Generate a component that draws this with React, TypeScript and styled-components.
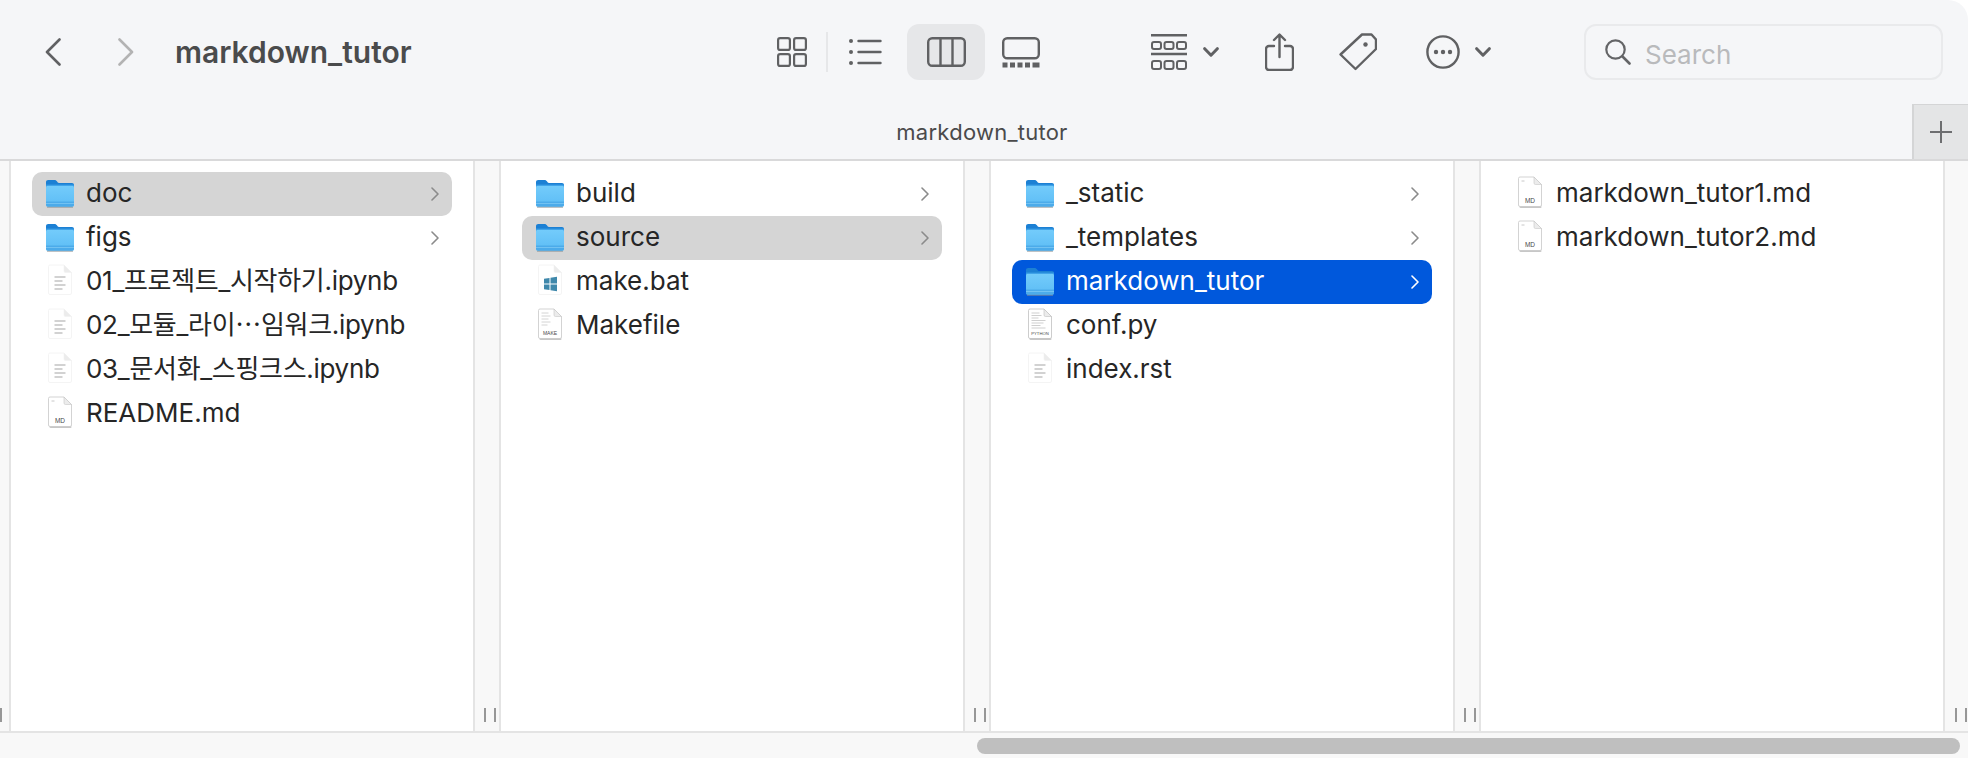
import React from "react";
import styled, { createGlobalStyle } from "styled-components";

const GlobalStyle = createGlobalStyle`
  html, body {
    margin: 0;
    padding: 0;
    background: #ffffff;
  }
  * {
    box-sizing: border-box;
  }
`;

const FONT = `Inter, "Noto Sans CJK KR", sans-serif`;

const Window = styled.div`
  width: 1968px;
  height: 758px;
  overflow: hidden;
  display: flex;
  flex-direction: column;
  font-family: ${FONT};
  color: #262626;
`;

const Header = styled.header`
  height: 161px;
  flex: none;
  background: #f5f6f8;
  border-bottom: 2px solid #d9d9da;
  border-top-right-radius: 20px;
  display: flex;
  flex-direction: column;
`;

const Toolbar = styled.div`
  height: 104px;
  flex: none;
  display: flex;
  align-items: center;
  padding-left: 45px;
`;

const Tool = styled.div<{ $gap?: number; $w: number; $dim?: boolean }>`
  flex: none;
  display: flex;
  justify-content: center;
  align-items: center;
  width: ${(p) => p.$w}px;
  margin-left: ${(p) => p.$gap ?? 0}px;
  color: ${(p) => (p.$dim ? "#b3b3b3" : "#606163")};
`;

const Title = styled.div`
  flex: none;
  width: 602px;
  margin-left: 41px;
  font-size: 30px;
  font-weight: 600;
  color: #4a4b4c;
  line-height: 32px;
`;

const Separator = styled.div`
  flex: none;
  width: 2px;
  height: 40px;
  margin-left: 19px;
  background: #e6e7e9;
`;

const ActiveTool = styled(Tool)`
  height: 56px;
  border-radius: 12px;
  background: #e6e7e9;
`;

const SearchBox = styled.div`
  flex: none;
  width: 359px;
  height: 56px;
  margin-left: 93px;
  border: 2px solid #e9eaec;
  border-radius: 12px;
  display: flex;
  align-items: center;
  gap: 14px;
  padding-left: 19px;
  color: #646567;
`;

const SearchText = styled.span`
  font-size: 26px;
  color: #b9babc;
  padding-top: 5px;
`;

const TabBar = styled.div`
  flex: 1;
  display: flex;
`;

const TabLabel = styled.div`
  flex: 1;
  display: flex;
  justify-content: center;
  align-items: center;
  padding-left: 52px;
  font-size: 22px;
  letter-spacing: 0.25px;
  color: #4a4a4b;
`;

const AddTab = styled.div`
  flex: none;
  width: 56px;
  display: flex;
  justify-content: center;
  align-items: center;
  background: #e4e5e6;
  border-left: 2px solid #d4d5d6;
  border-top: 1px solid #d4d5d6;
  color: #6d6e70;
`;

const Columns = styled.div`
  flex: none;
  height: 570px;
  display: flex;
`;

const Gutter = styled.div<{ $w: number; $pad: number; $edge?: boolean }>`
  flex: none;
  width: ${(p) => p.$w}px;
  padding-left: ${(p) => p.$pad}px;
  padding-bottom: 9px;
  display: flex;
  align-items: flex-end;
  gap: 8px;
  background: #f8f8f8;
  border-right: ${(p) => (p.$edge ? "none" : "2px solid #e4e4e4")};
  border-left: ${(p) => (p.$pad > 0 ? "2px solid #e4e4e4" : "none")};
`;

const GripBar = styled.span`
  width: 2px;
  height: 14px;
  background: #979797;
`;

const Column = styled.div`
  flex: none;
  width: 462px;
  background: #ffffff;
  padding: 11px 21px 0;
  display: flex;
  flex-direction: column;
`;

const Row = styled.div<{ $state?: "active" | "dim" }>`
  height: 44px;
  flex: none;
  display: flex;
  align-items: center;
  gap: 13px;
  padding: 0 13px 0 14px;
  border-radius: 10px;
  font-size: 26px;
  background: ${(p) =>
    p.$state === "active" ? "#0058dc" : p.$state === "dim" ? "#d5d5d5" : "transparent"};
  color: ${(p) => (p.$state === "active" ? "#ffffff" : "#262626")};
`;

const RowIcon = styled.span<{ $file?: boolean }>`
  flex: none;
  width: 28px;
  height: 34px;
  padding-bottom: ${(p) => (p.$file ? "4px" : "0")};
  display: flex;
  justify-content: center;
  align-items: center;
`;

const RowName = styled.span<{ $tight?: boolean }>`
  flex: 1;
  white-space: nowrap;
  line-height: 32px;
  margin-left: -1px;
  margin-top: -2px;
  letter-spacing: ${(p) => (p.$tight ? "-0.3px" : "0")};
`;

const RowChevron = styled.span<{ $active?: boolean }>`
  flex: none;
  display: flex;
  color: ${(p) => (p.$active ? "#ffffff" : "#8b8b8b")};
`;

const ScrollTrack = styled.div`
  flex: 1;
  background: #f8f8f8;
  border-top: 2px solid #e4e4e4;
  padding: 5px 0 0 977px;
`;

const ScrollThumb = styled.div`
  width: 983px;
  height: 16px;
  border-radius: 8px;
  background: #bfbfbf;
`;

const Chevron = ({ dir, w = 16, h = 28 }: { dir: "left" | "right"; w?: number; h?: number }) => (
  <svg width={w} height={h} viewBox="0 0 16 28" fill="none" stroke="currentColor" strokeWidth="2.6" strokeLinecap="round" strokeLinejoin="round">
    <path d={dir === "left" ? "M14.5 1.5 2 14l12.5 12.5" : "M1.5 1.5 14 14 1.5 26.5"} />
  </svg>
);

const Caret = () => (
  <svg width="16" height="10" viewBox="0 0 16 10" fill="none" stroke="currentColor" strokeWidth="3" strokeLinecap="round" strokeLinejoin="round">
    <path d="M1.7 1.7 8 8.2l6.3-6.5" />
  </svg>
);

const GridIcon = () => (
  <svg width="30" height="30" viewBox="0 0 30 30" fill="none" stroke="currentColor" strokeWidth="2.2">
    <rect x="1.1" y="1.1" width="11.8" height="11.8" rx="2" />
    <rect x="17.1" y="1.1" width="11.8" height="11.8" rx="2" />
    <rect x="1.1" y="17.1" width="11.8" height="11.8" rx="2" />
    <rect x="17.1" y="17.1" width="11.8" height="11.8" rx="2" />
  </svg>
);

const ListIcon = () => (
  <svg width="33" height="26" viewBox="0 0 33 26" fill="none" stroke="currentColor" strokeWidth="2.4" strokeLinecap="round">
    <path d="M9.5 2h22M9.5 13h22M9.5 24h22" />
    <circle cx="2" cy="2" r="2" fill="currentColor" stroke="none" />
    <circle cx="2" cy="13" r="2" fill="currentColor" stroke="none" />
    <circle cx="2" cy="24" r="2" fill="currentColor" stroke="none" />
  </svg>
);

const ColumnsIcon = () => (
  <svg width="39" height="30" viewBox="0 0 39 30" fill="none" stroke="currentColor" strokeWidth="2.4">
    <rect x="1.2" y="1.2" width="36.6" height="27.6" rx="4" />
    <path d="M13.5 1.2v27.6M25.5 1.2v27.6" />
  </svg>
);

const GalleryIcon = () => (
  <svg width="38" height="31" viewBox="0 0 38 31" fill="none" stroke="currentColor" strokeWidth="2.4">
    <rect x="1.2" y="1.2" width="35.6" height="20" rx="4" />
    <path d="M0.5 28h5M8 28h5M15.5 28h5M23 28h5M30.5 28h7" strokeWidth="5" />
  </svg>
);

const GroupIcon = () => (
  <svg width="36" height="36" viewBox="0 0 36 36" fill="none" stroke="currentColor" strokeWidth="2">
    <path d="M0 1.2h36M0 20h36" strokeWidth="2.4" />
    <rect x="1" y="8" width="9" height="7" rx="2" />
    <rect x="13.5" y="8" width="9" height="7" rx="2" />
    <rect x="26" y="8" width="9" height="7" rx="2" />
    <rect x="1" y="27" width="9" height="8" rx="2" />
    <rect x="13.5" y="27" width="9" height="8" rx="2" />
    <rect x="26" y="27" width="9" height="8" rx="2" />
  </svg>
);

const ShareIcon = () => (
  <svg width="29" height="38" viewBox="0 0 29 38" fill="none" stroke="currentColor" strokeWidth="2.4" strokeLinecap="round" strokeLinejoin="round">
    <path d="M9 13H4a3 3 0 0 0-3 3v18a3 3 0 0 0 3 3h21a3 3 0 0 0 3-3V16a3 3 0 0 0-3-3h-5" />
    <path d="M14.5 24V2M9 7l5.5-5.5L20 7" />
  </svg>
);

const TagIcon = () => (
  <svg width="38" height="38" viewBox="0 0 38 38" fill="none" stroke="currentColor" strokeWidth="2.4" strokeLinejoin="round">
    <path d="M23 1.5h9.5l4.5 5v9.5L16.5 36 1.5 21.5z" />
    <circle cx="26.5" cy="11.5" r="2.2" fill="currentColor" stroke="none" />
  </svg>
);

const MoreIcon = () => (
  <svg width="34" height="34" viewBox="0 0 34 34" fill="none" stroke="currentColor" strokeWidth="2.4">
    <circle cx="17" cy="17" r="15.6" />
    <circle cx="10" cy="17" r="2.2" fill="currentColor" stroke="none" />
    <circle cx="17" cy="17" r="2.2" fill="currentColor" stroke="none" />
    <circle cx="24" cy="17" r="2.2" fill="currentColor" stroke="none" />
  </svg>
);

const SearchIcon = () => (
  <svg width="26" height="26" viewBox="0 0 26 26" fill="none" stroke="currentColor" strokeWidth="2.2" strokeLinecap="round">
    <circle cx="10.5" cy="10.5" r="9.2" />
    <path d="m17.5 17.5 7 7" strokeWidth="2.6" />
  </svg>
);

const PlusIcon = () => (
  <svg width="22" height="22" viewBox="0 0 22 22" fill="none" stroke="currentColor" strokeWidth="2">
    <path d="M11 0v22M0 11h22" />
  </svg>
);

const RowCaret = () => (
  <svg width="8" height="14" viewBox="0 0 8 14" fill="none" stroke="currentColor" strokeWidth="1.6" strokeLinecap="round" strokeLinejoin="round">
    <path d="M1 1l6 6-6 6" />
  </svg>
);

const FolderIcon = () => (
  <svg width="28" height="28" viewBox="0 0 28 28">
    <defs>
      <linearGradient id="folderBody" x1="0" y1="0" x2="0" y2="1">
        <stop offset="0" stopColor="#74ccfb" />
        <stop offset="1" stopColor="#5cbcf5" />
      </linearGradient>
    </defs>
    <path d="M0 2.2C0 .9.9 0 2.2 0h6.3c1 0 1.6.4 2.2 1.1l1.1 1.4c.3.3.6.5 1.1.5H26c1.2 0 2 .8 2 2v4H0z" fill="#1c80d4" />
    <rect x="0" y="5.2" width="28" height="21.5" rx="2" fill="url(#folderBody)" />
    <rect x="0" y="4.6" width="28" height="1.2" fill="#3a9fe6" />
    <path d="M0 21.5h28v3.2a2 2 0 0 1-2 2H2a2 2 0 0 1-2-2z" fill="#4cabea" />
    <rect x="0" y="23" width="28" height="0.8" fill="#7cc8f4" />
    <rect x="1" y="26.7" width="26" height="1.3" fill="#8a8f94" opacity="0.55" />
  </svg>
);

const PageShape = ({ stroke, shade }: { stroke: string; shade?: boolean }) => (
  <>
    {shade && <rect x="1" y="30" width="22" height="2" rx="1" fill="#000" opacity="0.22" />}
    <path d="M1.5 1h14L23 8.5V29a1.5 1.5 0 0 1-1.5 1.5h-20A1.5 1.5 0 0 1 0 29V2.5A1.5 1.5 0 0 1 1.5 1z" fill="#fff" stroke={stroke} strokeWidth="0.8" />
    <path d="M15.5 1v6a1.5 1.5 0 0 0 1.5 1.5h6z" fill="#ececec" stroke={stroke} strokeWidth="0.6" />
  </>
);

const DocIcon = () => (
  <svg width="24" height="32" viewBox="-0.5 0 24 32">
    <PageShape stroke="#f1f1f1" />
    <path d="M6 13h11M6 17h8M6 21h11M6 25h8" stroke="#c4c4c4" strokeWidth="1.4" />
  </svg>
);

const MdIcon = () => (
  <svg width="24" height="32" viewBox="-0.5 0 24 32">
    <PageShape stroke="#c8c8c8" shade />
    <path d="M3 5h3" stroke="#c8c8c8" strokeWidth="1" />
    <text x="11.5" y="26.5" textAnchor="middle" fontSize="6.5" fontFamily="Liberation Sans, sans-serif" fill="#4a4a4a">MD</text>
  </svg>
);

const MakeIcon = () => (
  <svg width="24" height="32" viewBox="-0.5 0 24 32">
    <PageShape stroke="#c8c8c8" shade />
    <path d="M3 5h7M3 8h9M3 11h7M3 14h9M3 17h6" stroke="#d4d4d4" strokeWidth="1" />
    <text x="11.5" y="26.5" textAnchor="middle" fontSize="5" fontFamily="Liberation Sans, sans-serif" fill="#4a4a4a">MAKE</text>
  </svg>
);

const PythonIcon = () => (
  <svg width="24" height="32" viewBox="-0.5 0 24 32">
    <PageShape stroke="#c0c0c0" shade />
    <path d="M3 5h8M3 7.5h10M3 10h7M3 12.5h14M3 15h12M3 17.5h9M3 20h14" stroke="#cfcfcf" strokeWidth="1.2" />
    <text x="11.5" y="26.5" textAnchor="middle" fontSize="4.2" fontFamily="Liberation Sans, sans-serif" fill="#4a4a4a">PYTHON</text>
  </svg>
);

const BatIcon = () => (
  <svg width="24" height="32" viewBox="-0.5 0 24 32">
    <PageShape stroke="#f1f1f1" />
    <path d="M5.5 14.8 11 14v5.5H5.5zM12 13.8l6.5-1v6.7H12zM5.5 20.5H11V26l-5.5-.8zM12 20.5h6.5v6.7l-6.5-1z" fill="#3f88ab" />
  </svg>
);

type Entry = {
  name: string;
  icon: React.ReactNode;
  folder?: boolean;
  tight?: boolean;
  state?: "active" | "dim";
};

const columns: Entry[][] = [
  [
    { name: "doc", icon: <FolderIcon />, folder: true, state: "dim" },
    { name: "figs", icon: <FolderIcon />, folder: true },
    { name: "01_프로젝트_시작하기.ipynb", icon: <DocIcon />, tight: true },
    { name: "02_모듈_라이⋯임워크.ipynb", icon: <DocIcon />, tight: true },
    { name: "03_문서화_스핑크스.ipynb", icon: <DocIcon />, tight: true },
    { name: "README.md", icon: <MdIcon /> },
  ],
  [
    { name: "build", icon: <FolderIcon />, folder: true },
    { name: "source", icon: <FolderIcon />, folder: true, state: "dim" },
    { name: "make.bat", icon: <BatIcon /> },
    { name: "Makefile", icon: <MakeIcon /> },
  ],
  [
    { name: "_static", icon: <FolderIcon />, folder: true },
    { name: "_templates", icon: <FolderIcon />, folder: true },
    { name: "markdown_tutor", icon: <FolderIcon />, folder: true, state: "active" },
    { name: "conf.py", icon: <PythonIcon /> },
    { name: "index.rst", icon: <DocIcon /> },
  ],
  [
    { name: "markdown_tutor1.md", icon: <MdIcon /> },
    { name: "markdown_tutor2.md", icon: <MdIcon /> },
  ],
];

function Grip({ count = 2 }: { count?: number }) {
  return (
    <>
      {Array.from({ length: count }).map((_, i) => (
        <GripBar key={i} />
      ))}
    </>
  );
}

export default function App() {
  return (
    <>
      <GlobalStyle />
      <Window>
        <Header>
          <Toolbar>
            <Tool $w={16}><Chevron dir="left" /></Tool>
            <Tool $w={16} $gap={57} $dim><Chevron dir="right" /></Tool>
            <Title>markdown_tutor</Title>
            <Tool $w={30}><GridIcon /></Tool>
            <Separator />
            <Tool $w={33} $gap={21}><ListIcon /></Tool>
            <ActiveTool $w={78} $gap={25}><ColumnsIcon /></ActiveTool>
            <Tool $w={38} $gap={17}><GalleryIcon /></Tool>
            <Tool $w={36} $gap={111}><GroupIcon /></Tool>
            <Tool $w={16} $gap={16}><Caret /></Tool>
            <Tool $w={29} $gap={46}><ShareIcon /></Tool>
            <Tool $w={38} $gap={45}><TagIcon /></Tool>
            <Tool $w={34} $gap={49}><MoreIcon /></Tool>
            <Tool $w={16} $gap={15}><Caret /></Tool>
            <SearchBox>
              <SearchIcon />
              <SearchText>Search</SearchText>
            </SearchBox>
          </Toolbar>
          <TabBar>
            <TabLabel>markdown_tutor</TabLabel>
            <AddTab><PlusIcon /></AddTab>
          </TabBar>
        </Header>
        <Columns>
          <Gutter $w={11} $pad={0}><Grip count={1} /></Gutter>
          {columns.map((entries, i) => (
            <React.Fragment key={i}>
              <Column>
                {entries.map((entry) => (
                  <Row key={entry.name} $state={entry.state}>
                    <RowIcon $file={!entry.folder}>{entry.icon}</RowIcon>
                    <RowName $tight={entry.tight}>{entry.name}</RowName>
                    {entry.folder && (
                      <RowChevron $active={entry.state === "active"}>
                        <RowCaret />
                      </RowChevron>
                    )}
                  </Row>
                ))}
              </Column>
              {i < columns.length - 1 ? (
                <Gutter $w={28} $pad={9}><Grip /></Gutter>
              ) : (
                <Gutter $w={25} $pad={10} $edge><Grip /></Gutter>
              )}
            </React.Fragment>
          ))}
        </Columns>
        <ScrollTrack>
          <ScrollThumb />
        </ScrollTrack>
      </Window>
    </>
  );
}
